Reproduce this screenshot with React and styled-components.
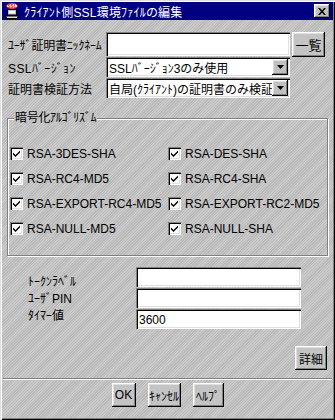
import React from "react";
import styled, { createGlobalStyle } from "styled-components";

const GlobalStyle = createGlobalStyle`
  html, body {
    margin: 0;
    padding: 0;
    background: #c0c0c0;
  }
  * {
    box-sizing: border-box;
  }
`;

const texture =
  "repeating-linear-gradient(135deg, #cbcbcb 0px, #cbcbcb 1px, #b9b9b9 1px, #b9b9b9 2px)";

const raised = `
  box-shadow: inset -1px -1px 0 #000, inset 1px 1px 0 #fff,
    inset -2px -2px 0 #808080, inset 2px 2px 0 #dfdfdf;
`;

const sunken = `
  box-shadow: inset 1px 1px 0 #808080, inset 2px 2px 0 #000,
    inset -1px -1px 0 #fff, inset -2px -2px 0 #dfdfdf;
`;

const Window = styled.div`
  width: 335px;
  height: 420px;
  padding: 2px;
  display: flex;
  flex-direction: column;
  background: ${texture};
  box-shadow: inset 1px 1px 0 #dfdfdf, inset 2px 2px 0 #fff,
    inset -1px -1px 0 #000, inset -2px -2px 0 #808080;
  font-family: "Liberation Sans", "Noto Sans CJK JP", sans-serif;
  font-size: 12px;
  color: #000;
`;

const TitleBar = styled.div`
  height: 18px;
  background: #000080;
  display: flex;
  align-items: center;
  gap: 4px;
  padding: 0 3px 0 2px;
  color: #fff;
`;

const TitleText = styled.span`
  font-size: 12px;
  letter-spacing: 0.2px;
  white-space: nowrap;
`;

const CloseButton = styled.div`
  margin-left: auto;
  width: 16px;
  height: 14px;
  background: #c0c0c0;
  display: flex;
  align-items: center;
  justify-content: center;
  ${raised}
`;

const FormGrid = styled.div`
  display: grid;
  grid-template-columns: 98px 184px 35px;
  grid-template-rows: 24px 20px 20px;
  row-gap: 1px;
  padding: 12px 0 0 6px;
  align-items: center;
`;

const Label = styled.span`
  white-space: nowrap;
  letter-spacing: ${(p) => p.$tight || 0}px;
`;

const TextField = styled.input`
  width: ${(p) => p.$w || 184}px;
  height: ${(p) => p.$h || 20}px;
  border: none;
  outline: none;
  background: #fff;
  padding: 2px 3px 0;
  font: inherit;
  color: #000;
  ${sunken}
`;

const Combo = styled.div`
  width: 184px;
  height: 20px;
  background: #fff;
  display: flex;
  align-items: center;
  padding: 2px;
  ${sunken}
`;

const ComboText = styled.span`
  flex: 1;
  overflow: hidden;
  white-space: nowrap;
  padding-left: 1px;
`;

const ArrowButton = styled.div`
  width: 16px;
  height: 16px;
  flex-shrink: 0;
  background: #c0c0c0;
  display: flex;
  align-items: center;
  justify-content: center;
  ${raised}
`;

const Button = styled.div`
  width: ${(p) => p.$w}px;
  height: ${(p) => p.$h || 24}px;
  background: #c4c4c4;
  display: flex;
  align-items: center;
  justify-content: center;
  white-space: nowrap;
  font-size: ${(p) => p.$fs || 12}px;
  ${raised}
`;

const SideButton = styled(Button)`
  justify-self: end;
  align-self: start;
`;

const GroupBox = styled.fieldset`
  margin: 13px 5px 0 5px;
  padding: 16px 2px 14px 2px;
  border: 1px solid #808080;
  box-shadow: inset 1px 1px 0 #fff, 1px 1px 0 #fff;
  min-width: 0;
`;

const GroupTitle = styled.legend`
  margin-left: 4px;
  padding: 0 1px;
  background: ${texture};
  position: relative;
  line-height: 14px;
  letter-spacing: -0.3px;
`;

const CheckGrid = styled.div`
  display: grid;
  grid-template-columns: 158px 1fr;
  grid-auto-rows: 25px;
  align-items: center;
`;

const CheckItem = styled.label`
  display: flex;
  align-items: center;
  gap: 4px;
  white-space: nowrap;
`;

const Box = styled.span`
  width: 13px;
  height: 13px;
  background: #fff;
  display: flex;
  align-items: center;
  justify-content: center;
  ${sunken}
`;

const TokenSection = styled.div`
  display: flex;
  margin: 11px 0 0 26px;
`;

const TokenLabels = styled.div`
  width: 108px;
  display: flex;
  flex-direction: column;
  padding-top: 7px;
  line-height: 17px;
  letter-spacing: 0.4px;
`;

const TokenFields = styled.div`
  display: flex;
  flex-direction: column;
  gap: 1px;
`;

const DetailRow = styled.div`
  display: flex;
  justify-content: flex-end;
  margin: 17px 6px 0 0;
`;

const Separator = styled.div`
  margin: 8px 1px 0;
  height: 2px;
  border-top: 1px solid #808080;
  border-bottom: 1px solid #fff;
`;

const ButtonRow = styled.div`
  display: flex;
  justify-content: center;
  gap: 12px;
  margin-top: 3px;
`;

const TitleIcon = () => (
  <svg width="16" height="16" viewBox="0 0 16 16">
    <ellipse cx="8" cy="3" rx="5.5" ry="2.8" fill="#fff" stroke="#e00000" strokeWidth="0.8" />
    <text x="8" y="4.6" fontSize="4.6" fill="#e00000" textAnchor="middle" fontFamily="Liberation Sans" fontWeight="bold">SSL</text>
    <rect x="3.5" y="6.5" width="9" height="5.5" fill="#c0c0c0" stroke="#000" strokeWidth="1" />
    <rect x="5" y="8" width="6" height="2.5" fill="#fff" />
    <path d="M1.5 13h13l-1.5 2.5h-10z" fill="#dfdfdf" stroke="#000" strokeWidth="1" />
  </svg>
);

const CloseIcon = () => (
  <svg width="8" height="7" viewBox="0 0 8 7">
    <path d="M0 0h2l2 2.5 2-2.5h2l-3 3.5 3 3.5h-2l-2-2.5-2 2.5h-2l3-3.5z" fill="#000" />
  </svg>
);

const DownArrow = () => (
  <svg width="7" height="4" viewBox="0 0 7 4">
    <path d="M0 0h7l-3.5 4z" fill="#000" />
  </svg>
);

const CheckMark = () => (
  <svg width="7" height="7" viewBox="0 0 7 7">
    <path d="M0 2.5l2.5 2.5 4.5-4.5v2l-4.5 4.5-2.5-2.5z" fill="#000" />
  </svg>
);

const algorithms = [
  "RSA-3DES-SHA",
  "RSA-DES-SHA",
  "RSA-RC4-MD5",
  "RSA-RC4-SHA",
  "RSA-EXPORT-RC4-MD5",
  "RSA-EXPORT-RC2-MD5",
  "RSA-NULL-MD5",
  "RSA-NULL-SHA",
];

function Combobox({ value }) {
  return (
    <Combo>
      <ComboText>{value}</ComboText>
      <ArrowButton>
        <DownArrow />
      </ArrowButton>
    </Combo>
  );
}

export default function App() {
  return (
    <>
      <GlobalStyle />
      <Window>
        <TitleBar>
          <TitleIcon />
          <TitleText>ｸﾗｲｱﾝﾄ側SSL環境ﾌｧｲﾙの編集</TitleText>
          <CloseButton>
            <CloseIcon />
          </CloseButton>
        </TitleBar>

        <FormGrid>
          <Label $tight={-0.2}>ﾕｰｻﾞ証明書ﾆｯｸﾈｰﾑ</Label>
          <TextField $h={24} readOnly value="" />
          <SideButton $w={33} $h={25} $fs={13}>一覧</SideButton>

          <Label $tight={0.4}>SSLﾊﾞｰｼﾞｮﾝ</Label>
          <Combobox value="SSLﾊﾞｰｼﾞｮﾝ3のみ使用" />
          <span />

          <Label>証明書検証方法</Label>
          <Combobox value="自局(ｸﾗｲｱﾝﾄ)の証明書のみ検証" />
          <span />
        </FormGrid>

        <GroupBox>
          <GroupTitle>暗号化ｱﾙｺﾞﾘｽﾞﾑ</GroupTitle>
          <CheckGrid>
            {algorithms.map((name) => (
              <CheckItem key={name}>
                <Box>
                  <CheckMark />
                </Box>
                {name}
              </CheckItem>
            ))}
          </CheckGrid>
        </GroupBox>

        <TokenSection>
          <TokenLabels>
            <Label>ﾄｰｸﾝﾗﾍﾞﾙ</Label>
            <Label>ﾕｰｻﾞPIN</Label>
            <Label>ﾀｲﾏｰ値</Label>
          </TokenLabels>
          <TokenFields>
            <TextField $w={165} readOnly value="" />
            <TextField $w={165} readOnly value="" />
            <TextField $w={165} readOnly value="3600" />
          </TokenFields>
        </TokenSection>

        <DetailRow>
          <Button $w={32} $h={24}>詳細</Button>
        </DetailRow>

        <Separator />

        <ButtonRow>
          <Button $w={24}>OK</Button>
          <Button $w={33}>ｷｬﾝｾﾙ</Button>
          <Button $w={31}>ﾍﾙﾌﾟ</Button>
        </ButtonRow>
      </Window>
    </>
  );
}
